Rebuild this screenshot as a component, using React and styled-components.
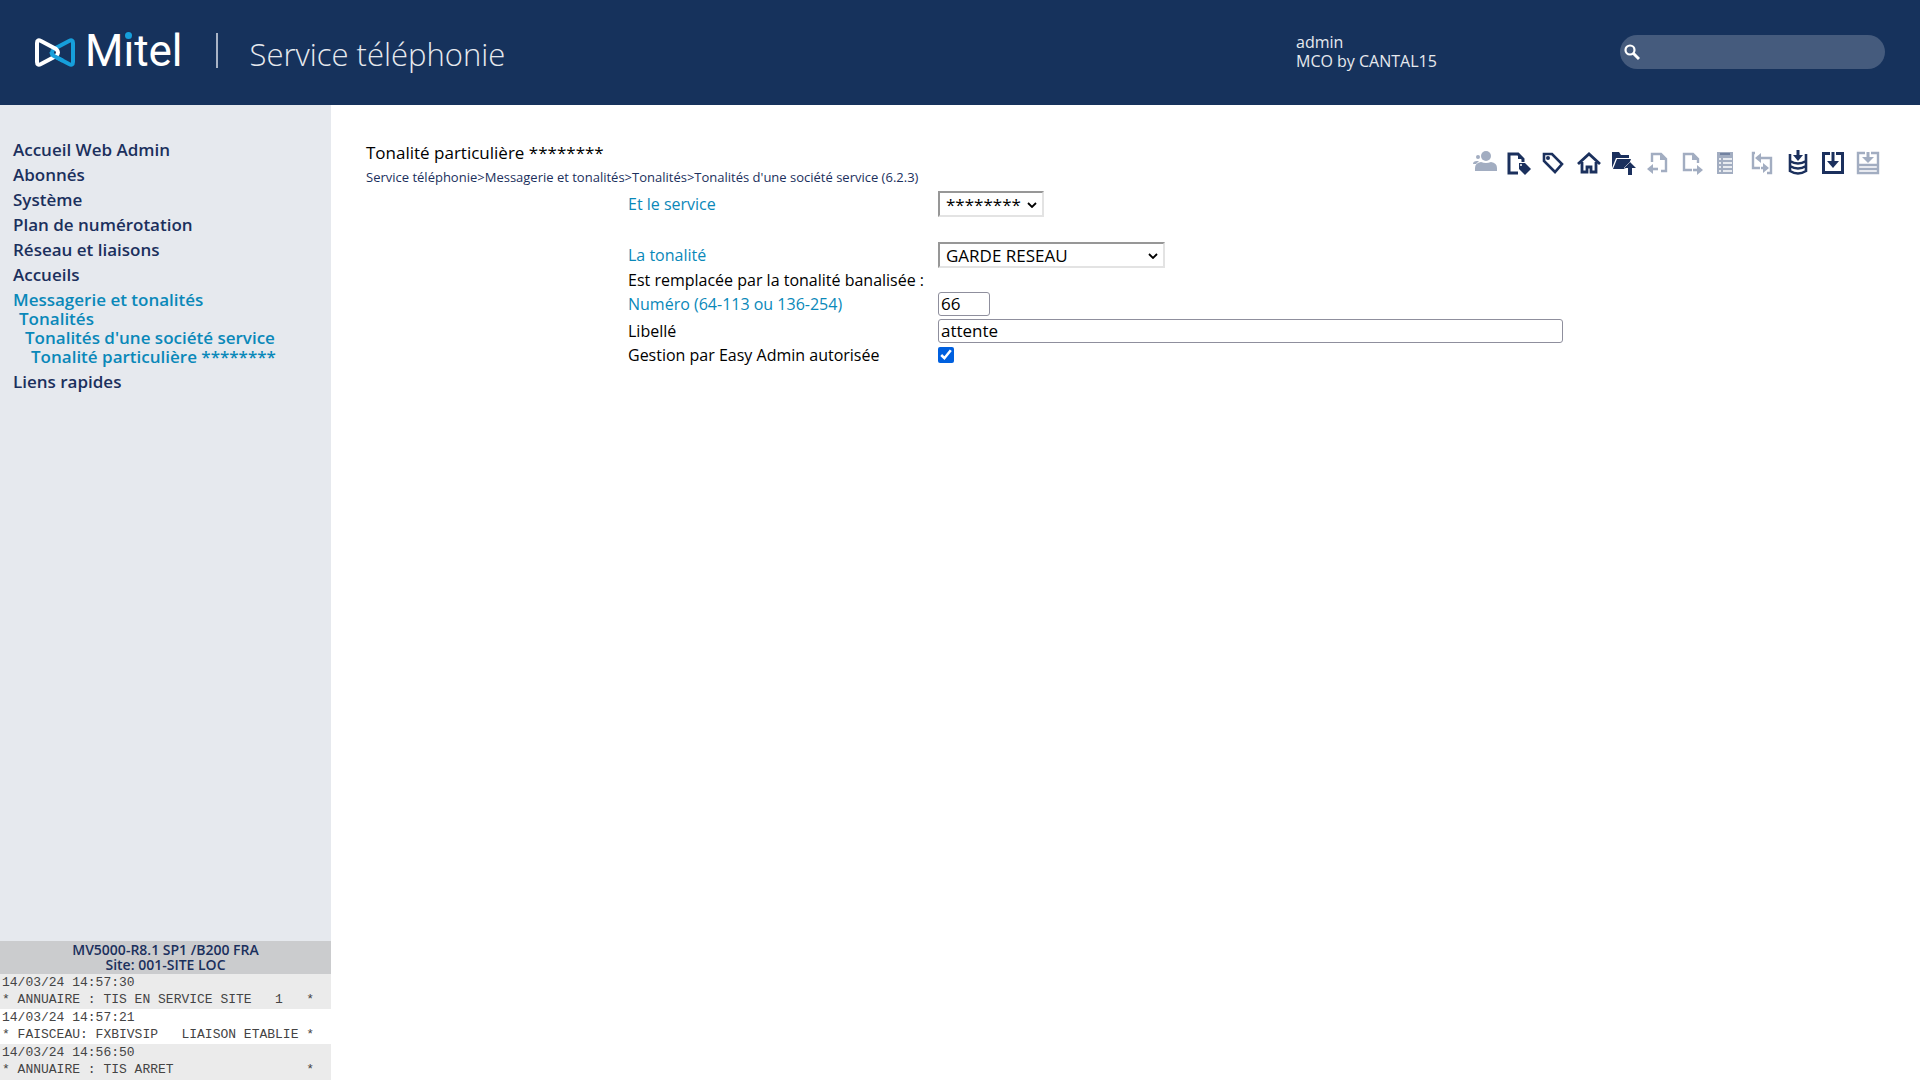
import React from "react";
import styled, { createGlobalStyle, ThemeProvider } from "styled-components";

const theme = {
  color: {
    navy: "#16325c",
    darkBlue: "#1b305d",
    blue: "#0a88b9",
    logoBlue: "#169fdb",
    side: "#e6e9ee",
    disabled: "#a2adc1",
    white: "#ffffff",
    black: "#000000"
  },
  font: {
    sans: '"Open Sans", "Noto Sans", sans-serif',
    mono: '"Liberation Mono", monospace'
  }
};

const GlobalStyle = createGlobalStyle`
  * {
    box-sizing: border-box;
  }
  body {
    margin: 0;
    font-family: ${({ theme }) => theme.font.sans};
    font-size: 16px;
  }
  a {
    color: inherit;
    text-decoration: none;
  }
`;

const Page = styled.div`
  display: flex;
  flex-direction: column;
  min-height: 100vh;
`;

// Header
const TopBar = styled.header`
  align-items: center;
  background-color: ${({ theme }) => theme.color.navy};
  color: ${({ theme }) => theme.color.side};
  display: flex;
  height: 105px;
  padding: 0 35px 2px;
`;

const Brand = styled.div`
  align-items: center;
  display: flex;
  flex: 1;
  padding-bottom: 2px;
`;

const LogoMark = styled.svg`
  height: 31px;
  margin-top: 4px;
  width: 42px;
`;

const LogoText = styled.span`
  color: ${({ theme }) => theme.color.white};
  font-family: Roboto, sans-serif;
  font-size: 44px;
  line-height: 44px;
  margin-left: 8px;
`;

const LogoI = styled.span`
  position: relative;
  &::after {
    background-color: ${({ theme }) => theme.color.logoBlue};
    border-radius: 50%;
    box-shadow: 0 0 0 1px ${({ theme }) => theme.color.navy};
    content: "";
    height: 7px;
    left: 2px;
    position: absolute;
    top: 7px;
    width: 7px;
  }
`;

const AppTitle = styled.h1`
  border-left: 2px solid #a9b4c6;
  font-size: 31px;
  font-weight: 300;
  height: 35px;
  line-height: 35px;
  margin: 0 0 0 33px;
  padding-left: 32px;
`;

const TitleText = styled.span`
  display: block;
  padding-top: 4px;
`;

const User = styled.div`
  line-height: 19px;
  width: 324px;
`;

const SearchBox = styled.label`
  align-items: center;
  background-color: #455b7d;
  border-radius: 17px;
  display: flex;
  height: 34px;
  padding: 0 16px 0 4px;
  width: 265px;
`;

const SearchInput = styled.input`
  background: transparent;
  border: 0;
  color: ${({ theme }) => theme.color.white};
  flex: 1;
  font: inherit;
  min-width: 0;
  outline: 0;
`;

const Body = styled.div`
  display: flex;
  flex: 1;
`;

// Side menu
const SideBar = styled.aside`
  background-color: ${({ theme }) => theme.color.side};
  display: flex;
  flex-direction: column;
  flex-shrink: 0;
  justify-content: space-between;
  width: 331px;
`;

const Menu = styled.ul`
  color: ${({ theme }) => theme.color.darkBlue};
  font-size: 17px;
  font-weight: 600;
  line-height: 19px;
  list-style: none;
  margin: 0;
  padding: 35px 0 0 13px;
`;

const MenuItem = styled.li`
  color: ${({ theme, $open }) => ($open ? theme.color.blue : "inherit")};
  margin-bottom: 6px;
`;

const MenuLink = styled.a`
  display: block;
`;

const SubMenu = styled.ul`
  list-style: none;
  margin: 0;
  padding-left: 6px;
`;

const SiteInfo = styled.div`
  background-color: #cbccce;
  color: ${({ theme }) => theme.color.darkBlue};
  font-size: 14px;
  font-weight: 600;
  line-height: 15px;
  padding: 1px 0 2px;
  text-align: center;
`;

const LogEntry = styled.pre`
  background-color: ${({ theme }) => theme.color.white};
  color: #444444;
  font-family: ${({ theme }) => theme.font.mono};
  font-size: 13px;
  line-height: 17px;
  margin: 0;
  padding: 0 0 1px 2px;
  &:nth-of-type(odd) {
    background-color: #ebebeb;
  }
  &:last-child {
    padding-bottom: 2px;
  }
`;

// Content
const Content = styled.main`
  flex: 1;
  min-width: 0;
  padding: 35px 40px 35px 35px;
`;

const ContentHead = styled.div`
  display: flex;
  justify-content: space-between;
`;

const PageTitle = styled.h2`
  font-size: 17px;
  font-weight: 400;
  line-height: 26px;
  margin: 0;
`;

const Breadcrumb = styled.nav`
  color: ${({ theme }) => theme.color.darkBlue};
  font-size: 13px;
  line-height: 22px;
`;

const Toolbar = styled.div`
  align-items: flex-start;
  display: flex;
  gap: 11px;
  padding-top: 11px;
`;

const ToolButton = styled.button`
  background: none;
  border: 0;
  color: ${({ theme }) => theme.color.darkBlue};
  height: 24px;
  padding: 0;
  width: 24px;
  &:disabled {
    color: ${({ theme }) => theme.color.disabled};
  }
  > svg {
    display: block;
    overflow: visible;
  }
`;

const Form = styled.form`
  display: grid;
  grid-template-columns: 310px 1fr;
  line-height: 24px;
  margin: 3px 0 0 262px;
  max-width: 935px;
`;

const Row = styled.div`
  align-items: center;
  display: grid;
  grid-column: 1 / -1;
  grid-template-columns: subgrid;
  justify-items: start;
  margin-bottom: ${({ $gap }) => $gap || 0}px;
`;

const Label = styled.label`
  color: ${({ theme, $link }) => ($link ? theme.color.blue : theme.color.black)};
  white-space: nowrap;
`;

const SelectWrapper = styled.div`
  display: flex;
  position: relative;
  width: ${({ $width }) => $width}px;
`;

const SelectArrow = styled.svg`
  height: 6px;
  pointer-events: none;
  position: absolute;
  right: 7px;
  top: 11px;
  width: 10px;
`;

const SelectField = styled.select`
  appearance: none;
  background-color: ${({ theme }) => theme.color.white};
  border: 2px solid;
  border-color: #979797 #e3e3e3 #e3e3e3 #979797;
  border-radius: 0;
  color: ${({ theme }) => theme.color.black};
  font-family: inherit;
  font-size: 17px;
  height: 26px;
  padding: 0 6px 2px;
  width: 100%;
`;

const TextInput = styled.input`
  border: 1px solid #8f8f9d;
  border-radius: 3px;
  font-family: inherit;
  font-size: 17px;
  height: 24px;
  padding: 0 2px 2px;
  width: ${({ $width }) => $width};
`;

const CheckBox = styled.input`
  accent-color: #0060df;
  height: 16px;
  margin: 0;
  width: 16px;
`;

const line = {
  fill: "none",
  stroke: "currentColor",
  strokeWidth: 3
};

const icons = {
  users: (
    <>
      <circle cx="15" cy="5" r="5" fill="currentColor" />
      <path d="M4 20v-3q0-5 6-6 5 2 10 0 6 1 6 6v3z" fill="currentColor" />
      <circle cx="7" cy="6" r="2" fill="currentColor" />
      <path d="M2 13q0-3 4-3l2 0-3 3z" fill="currentColor" />
    </>
  ),
  pageTag: (
    <>
      <path d="M12 22H3V3h9l5 5v3" {...line} />
      <path d="M12 2v6h6z" fill="currentColor" />
      <path d="M13 12h6l6 6-6 6-6-6z" fill="currentColor" />
      <circle cx="15" cy="14" r="1" fill="#fff" />
    </>
  ),
  tag: (
    <>
      <path d="M3 3h8l10 10-7 8L3 10z" {...line} strokeWidth="2.6" />
      <circle cx="7" cy="7" r="2" fill="currentColor" />
    </>
  ),
  home: (
    <path d="M2 13L13 3l11 10M6 11v10h5v-5h4v5h5V11" {...line} strokeWidth="2.8" />
  ),
  folderUp: (
    <>
      <path d="M1 17V1h7l2 3h8v3H5z" fill="currentColor" />
      <path d="M6 8h14l-2 5-4 5H2z" fill="currentColor" />
      <path
        d="M19 11l6 6h-4v7h-4v-7h-4z"
        fill="currentColor"
        stroke="#fff"
        strokeWidth="1"
        paintOrder="stroke"
      />
    </>
  ),
  pageLeft: (
    <>
      <path d="M6 11V3h9l5 5v12h-5" {...line} strokeWidth="2.4" />
      <path d="M14 2v7h7z" fill="currentColor" />
      <path d="M12 18H5" {...line} strokeWidth="2.6" />
      <path d="M7 13v10l-6-5z" fill="currentColor" />
    </>
  ),
  pageRight: (
    <>
      <path d="M11 19H3V3h9l5 5v4" {...line} strokeWidth="2.4" />
      <path d="M11 2v7h7z" fill="currentColor" />
      <path d="M12 19h6" {...line} strokeWidth="2.6" />
      <path d="M16 14v10l6-5z" fill="currentColor" />
    </>
  ),
  list: (
    <>
      <path d="M1 1h16v22H1z" fill="currentColor" />
      <path d="M4 3h10" stroke="#7282a0" strokeWidth="2" />
      <path d="M3 8h2m2 0h9M3 12h2m2 0h9M3 16h2m2 0h9M3 20h2m2 0h9" stroke="#fff" strokeWidth="1.4" />
    </>
  ),
  swap: (
    <>
      <path d="M4 2H2v15h7M9 7h11v15h-4M10 17h5" {...line} strokeWidth="2.4" />
      <path d="M10 2v10L4 7z" fill="currentColor" />
      <path d="M12 12v10l6-5z" fill="currentColor" />
    </>
  ),
  database: (
    <>
      <path d="M4 3v17q8 5 16 0V3M4 10q8 5 16 0M4 15q8 5 16 0" {...line} strokeWidth="2.6" />
      <path d="M12 -1v6" {...line} />
      <path d="M7 4h10l-5 6z" fill="currentColor" />
    </>
  ),
  download: (
    <>
      <path d="M9 2.5H2.5v19h19v-19H15" {...line} />
      <path d="M12 1v11" {...line} />
      <path d="M6 10h12l-6 7z" fill="currentColor" />
    </>
  ),
  downloadList: (
    <>
      <path d="M9 2H2v20h20V2h-7M2 14h20M2 18h20" {...line} strokeWidth="2.4" />
      <path d="M12 1v6" {...line} />
      <path d="M6 6h12l-6 6z" fill="currentColor" />
    </>
  )
};

const tools = [
  { icon: "users", label: "Abonnés", disabled: true },
  { icon: "pageTag", label: "Fiche" },
  { icon: "tag", label: "Étiquette" },
  { icon: "home", label: "Accueil" },
  { icon: "folderUp", label: "Niveau supérieur" },
  { icon: "pageLeft", label: "Précédent", disabled: true },
  { icon: "pageRight", label: "Suivant", disabled: true },
  { icon: "list", label: "Liste", disabled: true },
  { icon: "swap", label: "Échanger", disabled: true },
  { icon: "database", label: "Sauvegarder" },
  { icon: "download", label: "Télécharger" },
  { icon: "downloadList", label: "Télécharger la liste", disabled: true }
];

const menuBefore = [
  "Accueil Web Admin",
  "Abonnés",
  "Système",
  "Plan de numérotation",
  "Réseau et liaisons",
  "Accueils"
];

const log = [
  "14/03/24 14:57:30\n* ANNUAIRE : TIS EN SERVICE SITE   1   *",
  "14/03/24 14:57:21\n* FAISCEAU: FXBIVSIP   LIAISON ETABLIE *",
  "14/03/24 14:56:50\n* ANNUAIRE : TIS ARRET                 *"
];

const Select = ({ id, width, children }) => (
  <SelectWrapper $width={width}>
    <SelectField id={id}>{children}</SelectField>
    <SelectArrow viewBox="0 0 10 6">
      <path d="M1 1l4 4 4-4" fill="none" stroke="#000" strokeWidth="1.8" />
    </SelectArrow>
  </SelectWrapper>
);

const Header = () => (
  <TopBar>
    <Brand>
      <LogoMark viewBox="1 0 42 31" fill="none" strokeWidth="4">
        <path
          d="M39 6Q39 2 35 4L20 12Q16 15.5 20 19L35 27Q39 29 39 25Z"
          stroke={theme.color.logoBlue}
        />
        <path
          d="M3 6Q3 2 7 4L22 12Q26 15.5 22 19L7 27Q3 29 3 25Z"
          stroke="#fff"
        />
        <path d="M17.5 15Q17.5 17.7 20 19L29 23.8" stroke={theme.color.logoBlue} />
      </LogoMark>
      <LogoText>
        M<LogoI>i</LogoI>tel
      </LogoText>
      <AppTitle>
        <TitleText>Service téléphonie</TitleText>
      </AppTitle>
    </Brand>
    <User>
      admin
      <br />
      MCO by CANTAL15
    </User>
    <SearchBox>
      <svg width="16" height="18" viewBox="0 0 16 18" fill="none" stroke="#fff">
        <circle cx="6" cy="7" r="4.5" strokeWidth="2.2" />
        <path d="M9 10l6 6" strokeWidth="3" />
      </svg>
      <SearchInput type="search" aria-label="Rechercher" />
    </SearchBox>
  </TopBar>
);

const SideMenu = () => (
  <SideBar>
    <nav>
      <Menu>
        {menuBefore.map(text => (
          <MenuItem key={text}>
            <MenuLink href="#">{text}</MenuLink>
          </MenuItem>
        ))}
        <MenuItem $open>
          <MenuLink href="#">Messagerie et tonalités</MenuLink>
          <SubMenu>
            <li>
              <MenuLink href="#">Tonalités</MenuLink>
              <SubMenu>
                <li>
                  <MenuLink href="#">Tonalités d'une société service</MenuLink>
                  <SubMenu>
                    <li>
                      <MenuLink href="#">Tonalité particulière ********</MenuLink>
                    </li>
                  </SubMenu>
                </li>
              </SubMenu>
            </li>
          </SubMenu>
        </MenuItem>
        <MenuItem>
          <MenuLink href="#">Liens rapides</MenuLink>
        </MenuItem>
      </Menu>
    </nav>
    <div>
      <SiteInfo>
        MV5000-R8.1 SP1 /B200 FRA
        <br />
        Site: 001-SITE LOC
      </SiteInfo>
      {log.map(entry => (
        <LogEntry key={entry}>{entry}</LogEntry>
      ))}
    </div>
  </SideBar>
);

const ToneForm = () => (
  <Form>
    <Row $gap={25}>
      <Label $link htmlFor="service">
        Et le service
      </Label>
      <Select id="service" width={106}>
        <option>********</option>
      </Select>
    </Row>
    <Row>
      <Label $link htmlFor="tone">
        La tonalité
      </Label>
      <Select id="tone" width={227}>
        <option>GARDE RESEAU</option>
      </Select>
    </Row>
    <Row>
      <Label as="span">Est remplacée par la tonalité banalisée :</Label>
    </Row>
    <Row $gap={3}>
      <Label $link htmlFor="number">
        Numéro (64-113 ou 136-254)
      </Label>
      <TextInput id="number" $width="52px" defaultValue="66" />
    </Row>
    <Row>
      <Label htmlFor="name">Libellé</Label>
      <TextInput id="name" $width="100%" defaultValue="attente" />
    </Row>
    <Row>
      <Label htmlFor="easy">Gestion par Easy Admin autorisée</Label>
      <CheckBox id="easy" type="checkbox" defaultChecked />
    </Row>
  </Form>
);

const App = () => (
  <ThemeProvider theme={theme}>
    <GlobalStyle />
    <Page>
      <Header />
      <Body>
        <SideMenu />
        <Content>
          <ContentHead>
            <div>
              <PageTitle>Tonalité particulière ********</PageTitle>
              <Breadcrumb>
                <a href="#">Service téléphonie</a>&gt;
                <a href="#">Messagerie et tonalités</a>&gt;
                <a href="#">Tonalités</a>&gt;
                <a href="#">Tonalités d'une société service (6.2.3)</a>
              </Breadcrumb>
            </div>
            <Toolbar>
              {tools.map(({ icon, label, disabled }) => (
                <ToolButton key={icon} type="button" aria-label={label} disabled={disabled}>
                  <svg width="24" height="24" viewBox="0 0 24 24">
                    {icons[icon]}
                  </svg>
                </ToolButton>
              ))}
            </Toolbar>
          </ContentHead>
          <ToneForm />
        </Content>
      </Body>
    </Page>
  </ThemeProvider>
);

export default App;
